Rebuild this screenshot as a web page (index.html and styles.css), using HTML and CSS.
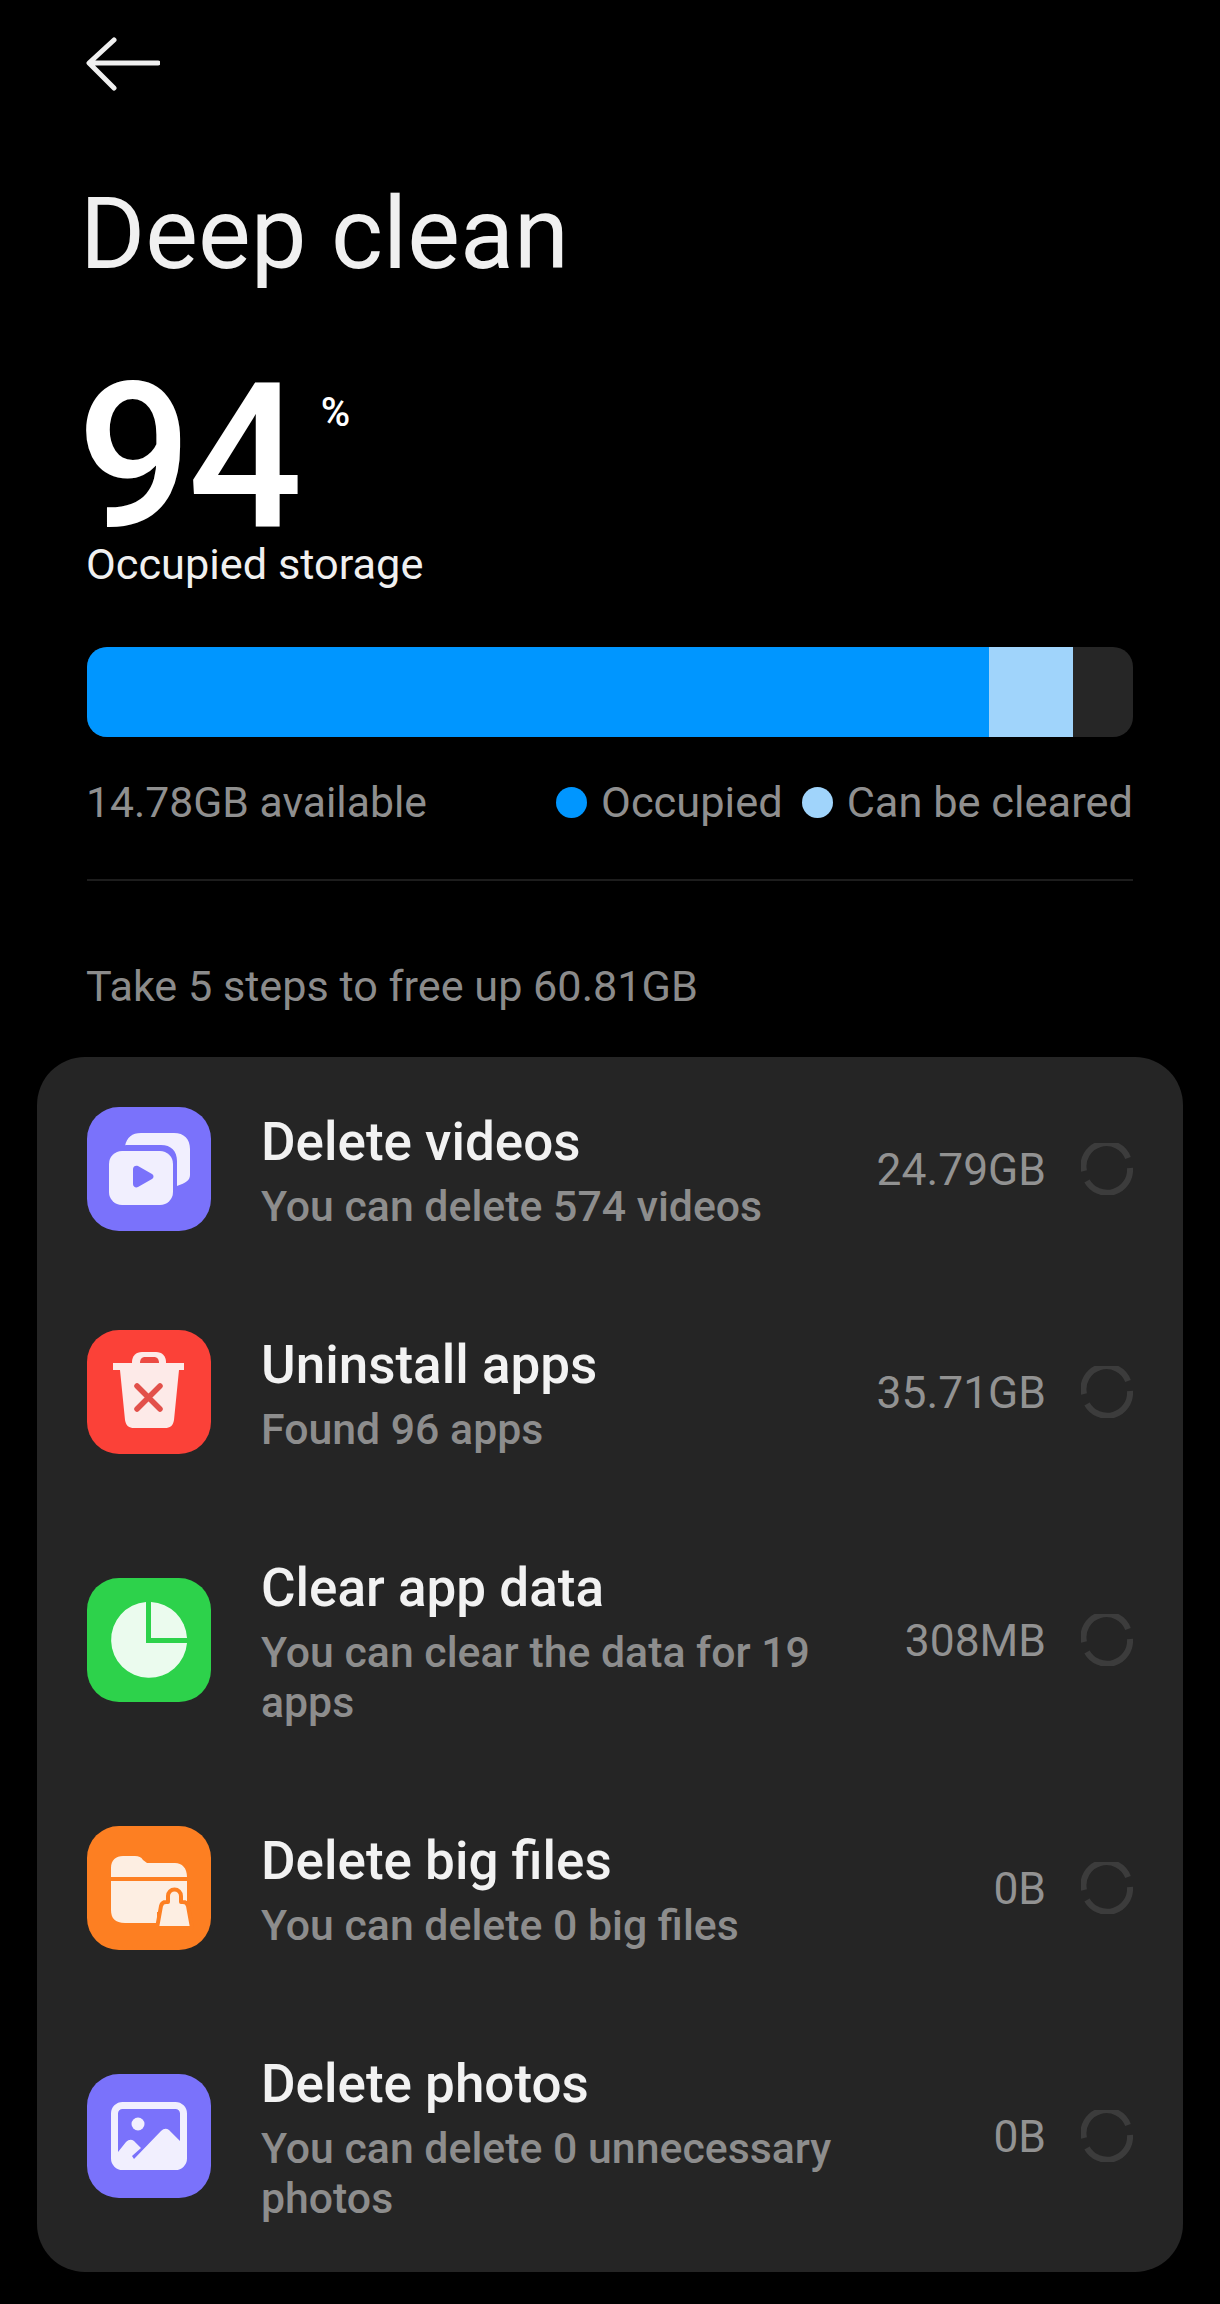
FILE: index.html
```html
<!DOCTYPE html>
<html lang="en">
<head>
<meta charset="utf-8">
<title>Deep clean</title>
<link rel="stylesheet" href="styles.css">
</head>
<body>
<main class="page">
  <svg class="back" viewBox="0 0 74 54" aria-hidden="true"><path d="M72 26H4M28 3 3 26l25 25" fill="none" stroke="#f0f0f0" stroke-width="5" stroke-linecap="round" stroke-linejoin="round"/></svg>
  <h1 class="title">Deep clean</h1>
  <div class="usage"><span class="usage-num">94</span><span class="usage-pct">%</span></div>
  <div class="usage-label">Occupied storage</div>
  <div class="bar"><div class="bar-used"></div><div class="bar-clear"></div></div>
  <div class="legend">
    <span class="avail">14.78GB available</span>
    <span class="key"><i class="dot dot-used"></i>Occupied</span>
    <span class="key key-next"><i class="dot dot-clear"></i>Can be cleared</span>
  </div>
  <div class="divider"></div>
  <p class="steps">Take 5 steps to free up 60.81GB</p>
  <section class="card">
    <div class="row">
      <svg class="icon" viewBox="0 0 124 124"><rect width="124" height="124" rx="32" fill="#7a72fb"/><path d="M38 39C40 30 45 26 54 26H87C97 26 103 32 103 42V68C103 73 99 76 90 79V54C90 44 84 38 74 38H38z" fill="#f1effe"/><rect x="22" y="44" width="64" height="54" rx="13" fill="#f1effe"/><path d="M46 62c0-3 3-4 5-3l14 8c2 1 2 4 0 5l-14 8c-2 1-5 0-5-3z" fill="#7a72fb"/></svg>
      <div class="text"><div class="name">Delete videos</div><div class="sub">You can delete 574 videos</div></div>
      <span class="size">24.79GB</span>
      <svg class="spin" viewBox="0 0 52 52"><path d="M3 28A23 23 0 0 1 47 15M49 25A23 23 0 0 1 6 38" fill="none" stroke="#3c3c3c" stroke-width="6"/></svg>
    </div>
    <div class="row">
      <svg class="icon" viewBox="0 0 124 124"><rect width="124" height="124" rx="32" fill="#fb4138"/><path d="M45 34v-2c0-6 4-10 10-10h14c6 0 10 4 10 10v2z" fill="#fdeae8"/><path d="M53 33c0-4 2-6 5-6h9c3 0 5 2 5 6z" fill="#ec4a42"/><path d="M26 33h71v7h-5l-5 50c-1 6-4 8-9 8H47c-5 0-8-2-9-8l-5-50h-7z" fill="#fdeae8"/><path d="M50 56l23 23M73 56 50 79" stroke="#e2504a" stroke-width="5.500" stroke-linecap="round"/></svg>
      <div class="text"><div class="name">Uninstall apps</div><div class="sub">Found 96 apps</div></div>
      <span class="size">35.71GB</span>
      <svg class="spin" viewBox="0 0 52 52"><path d="M3 28A23 23 0 0 1 47 15M49 25A23 23 0 0 1 6 38" fill="none" stroke="#3c3c3c" stroke-width="6"/></svg>
    </div>
    <div class="row row-tall">
      <svg class="icon" viewBox="0 0 124 124"><rect width="124" height="124" rx="32" fill="#2dd24b"/><path d="M59 24V65H100A38 38 0 1 1 59 24z" fill="#ebfbee"/><path d="M64 24A38 38 0 0 1 100 60H64z" fill="#ebfbee"/></svg>
      <div class="text"><div class="name">Clear app data</div><div class="sub">You can clear the data for 19 apps</div></div>
      <span class="size">308MB</span>
      <svg class="spin" viewBox="0 0 52 52"><path d="M3 28A23 23 0 0 1 47 15M49 25A23 23 0 0 1 6 38" fill="none" stroke="#3c3c3c" stroke-width="6"/></svg>
    </div>
    <div class="row">
      <svg class="icon" viewBox="0 0 124 124"><rect width="124" height="124" rx="32" fill="#fd7f22"/><path d="M24 51V42C24 34 29 30 36 30H48C52 30 54 31 56 34L60 37H88C95 37 100 42 100 51z" fill="#fdeee2"/><path d="M24 55H100V86H70V97H38C28 97 24 92 24 84z" fill="#fdeee2"/><path d="M70 102L74 80Q75 76 79 76H81V70A6.500 6.500 0 0 1 94 70V76H96Q100 76 101 80L105 102z" fill="#fdeee2" stroke="#fd7f22" stroke-width="4" stroke-linejoin="round"/></svg>
      <div class="text"><div class="name">Delete big files</div><div class="sub">You can delete 0 big files</div></div>
      <span class="size">0B</span>
      <svg class="spin" viewBox="0 0 52 52"><path d="M3 28A23 23 0 0 1 47 15M49 25A23 23 0 0 1 6 38" fill="none" stroke="#3c3c3c" stroke-width="6"/></svg>
    </div>
    <div class="row row-tall">
      <svg class="icon" viewBox="0 0 124 124"><rect width="124" height="124" rx="32" fill="#7a72fb"/><rect x="27.500" y="31.500" width="69" height="61" rx="8" fill="none" stroke="#f1effe" stroke-width="7"/><circle cx="51" cy="50" r="6.500" fill="#f1effe"/><path d="M31 78L39 68Q43 64 47 67L54 74L45 82L47 85L74 57Q78 53 82 56L93 67V90H31z" fill="#f1effe"/></svg>
      <div class="text"><div class="name">Delete photos</div><div class="sub">You can delete 0 unnecessary photos</div></div>
      <span class="size">0B</span>
      <svg class="spin" viewBox="0 0 52 52"><path d="M3 28A23 23 0 0 1 47 15M49 25A23 23 0 0 1 6 38" fill="none" stroke="#3c3c3c" stroke-width="6"/></svg>
    </div>
  </section>
</main>
</body>
</html>
```
FILE: styles.css
```css
* { box-sizing: border-box; }
html, body { margin: 0; background: #000; }
body { font-family: Roboto, "Noto Sans", sans-serif; }
.page { width: 1220px; height: 2304px; padding: 37px 37px 0; overflow: hidden; display: flex; flex-direction: column; }
.back { display: block; width: 74px; height: 54px; margin-left: 49px; flex: none; }
.title { margin: 82px 0 0 43px; font-size: 99.400px; line-height: 122px; font-weight: 400; color: #f0f0f0; white-space: nowrap; }
.usage { margin: 80px 0 0 40px; height: 165px; display: flex; align-items: flex-start; color: #fff; }
.usage-num { font-size: 202px; line-height: 165px; font-weight: 500; letter-spacing: -4px; }
.usage-pct { font-size: 40px; line-height: 40px; font-weight: 500; margin: 18px 0 0 22px; }
.usage-label { margin: 0 0 0 49px; font-size: 43.300px; line-height: 50px; color: #f0f0f0; }
.bar { margin: 57px 0 0 50px; width: 1046px; height: 90px; flex: none; border-radius: 20px; background: #262626; overflow: hidden; display: flex; }
.bar-used { width: 902px; background: #0096ff; }
.bar-clear { width: 84px; background: #a0d4fb; }
.legend { margin: 40px 0 0 49px; width: 1047px; height: 50px; display: flex; align-items: center; font-size: 43.400px; color: #8f8f8f; white-space: nowrap; }
.avail { margin-right: auto; font-size: 42.700px; }
.key { display: flex; align-items: center; }
.key-next { margin-left: 19px; }
.dot { width: 31px; height: 31px; border-radius: 50%; margin-right: 14px; }
.dot-used { background: #0096ff; }
.dot-clear { background: #a0d4fb; }
.divider { margin: 52px 0 0 50px; width: 1046px; height: 2px; flex: none; background: #1d1d1d; }
.steps { margin: 81px 0 0 49px; font-size: 43.200px; line-height: 50px; color: #8b8b8b; }
.card { margin: 45px 0 0 0; width: 1146px; height: 1215px; flex: none; border-radius: 48px; background: #252525; padding: 0 50px; display: flex; flex-direction: column; }
.row { display: flex; align-items: center; height: 223px; flex: none; }
.row-tall { height: 273px; }
.icon { width: 124px; height: 124px; flex: none; }
.text { margin: 0 0 3px 50px; flex: 1; min-width: 0; }
.name { font-size: 53px; line-height: 78px; font-weight: 500; color: #f2f2f2; }
.sub { font-size: 42.800px; line-height: 50px; font-weight: 500; color: #8d8d8d; max-width: 585px; }
.size { font-size: 44.400px; color: #929292; margin: 3px 0 0 30px; white-space: nowrap; }
.spin { width: 52px; height: 52px; margin-left: 35px; flex: none; }
```
